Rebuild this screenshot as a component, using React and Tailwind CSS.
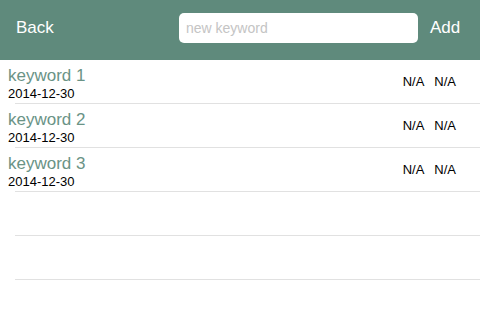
const keywords = [
  { name: 'keyword 1', date: '2014-12-30' },
  { name: 'keyword 2', date: '2014-12-30' },
  { name: 'keyword 3', date: '2014-12-30' },
];

function Separator() {
  return <div className="ml-[15px] h-px bg-[#e1e1e1]" />;
}

export default function App() {
  return (
    <div className="w-[480px] h-[320px] bg-white overflow-hidden font-['Liberation_Sans',Arial,sans-serif]">
      <div className="h-[60px] bg-[#5f8a7c] flex items-center pb-[4px]">
        <button className="w-[179px] text-left pl-4 text-[17px] text-white">Back</button>
        <div className="w-[239px] h-[30px] bg-white rounded-[5px] flex items-center px-[7px]">
          <input
            placeholder="new keyword"
            className="w-full text-[14px] text-[#333] placeholder:text-[#c4c4c4] outline-none bg-transparent"
          />
        </div>
        <button className="ml-3 text-[17px] text-white">Add</button>
      </div>

      {keywords.map((k) => (
        <div key={k.name}>
          <div className="h-[43px] flex items-center pl-2 pr-6">
            <div className="flex-1 flex flex-col pt-[4px]">
              <span className="text-[17px] leading-[20px] text-[#6a9386]">{k.name}</span>
              <span className="text-[13px] leading-[15px] text-black">{k.date}</span>
            </div>
            <div className="flex gap-[10px] text-[13px] text-black">
              <span>N/A</span>
              <span>N/A</span>
            </div>
          </div>
          <Separator />
        </div>
      ))}

      {[0, 1].map((i) => (
        <div key={i}>
          <div className="h-[43px]" />
          <Separator />
        </div>
      ))}
    </div>
  );
}
